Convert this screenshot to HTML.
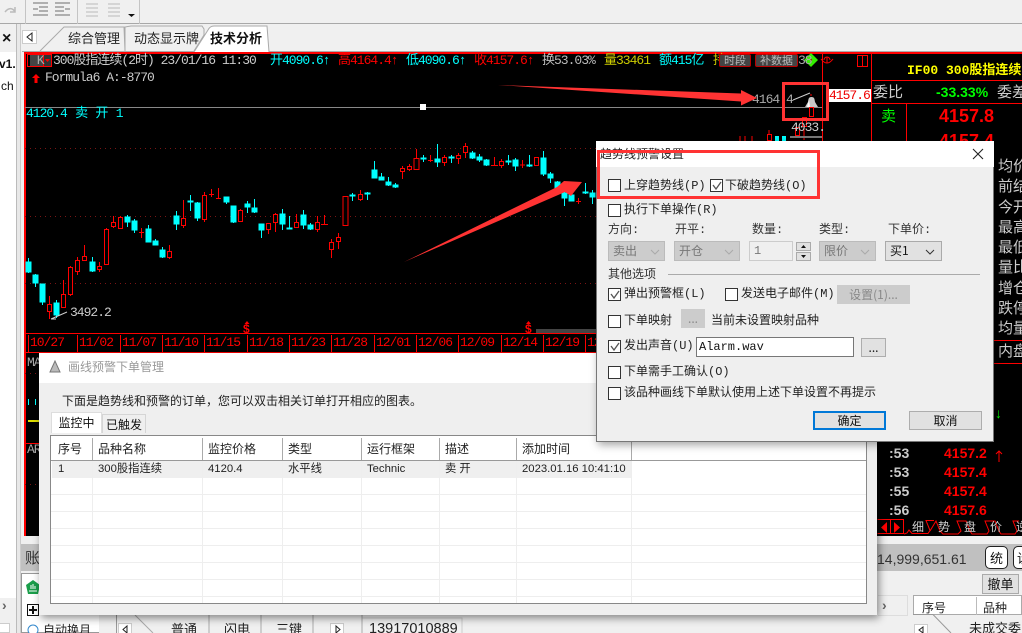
<!DOCTYPE html>
<html><head><meta charset="utf-8"><style>
html,body{margin:0;padding:0;width:1022px;height:633px;overflow:hidden;background:#f0f0f0}
body{position:relative;font:12px "Liberation Sans","Noto Sans CJK SC",sans-serif;color:#111}
div,span{position:absolute;white-space:nowrap;box-sizing:border-box}
.m{font-family:"Liberation Mono","WenQuanYi Zen Hei",monospace;font-size:13px;letter-spacing:-1px;line-height:14px}
.b{font-family:"Liberation Sans","Noto Sans CJK SC",sans-serif;font-weight:bold}
.cb{width:13px;height:13px;border:1px solid #333;background:#fff}
.t{font-family:"Liberation Mono","Noto Sans CJK SC",monospace;font-size:12px;line-height:16px;color:#222}
.sel{height:20px;background:#ccc;border:1px solid #bbb;color:#777;font:12px/18px "Noto Sans CJK SC",sans-serif;padding-left:4px}
.btn{background:#e1e1e1;border:1px solid #adadad;text-align:center;font:12px/17px "Noto Sans CJK SC",sans-serif;color:#111}
.th{top:438px;height:21px;font:12px/21px "Noto Sans CJK SC",sans-serif;color:#222}
.td{top:461px;height:17px;font:11.3px/17px "Liberation Sans","Noto Sans CJK SC",sans-serif;color:#222}
.x{top:336px;color:#f00}
.c{color:#0ff}.r{color:#f00}
.tb{top:518px;color:#ccc;font:12px/18px "Noto Sans CJK SC",sans-serif}
</style></head><body>
<!-- toolbar -->
<div style="left:0;top:0;width:1022px;height:24px;background:#f0f0f0;border-bottom:1px solid #a8a8a8"></div>
<svg style="position:absolute;left:0;top:0" width="140" height="25"><path d="M25.500 0V24M77.500 0V24M139.500 0V24" stroke="#c4c4c4"/><path d="M5 12c4-5 8-4 10 0M15 7v5h-5" fill="none" stroke="#bbb" stroke-width="1.500"/><path d="M33 3h15M39 7h9M39 11h9M33 15h15M33 9h5" stroke="#999" stroke-width="1.400"/><path d="M55 3h15M55 7h9M55 11h9M55 15h15M65 9h5" stroke="#999" stroke-width="1.400"/><path d="M86 4h12M86 8h12M86 12h12M86 16h12" stroke="#ccc" stroke-width="1.400"/><path d="M108 4h12M108 8h12M108 12h12M108 16h12" stroke="#ccc" stroke-width="1.400"/><path d="M128 14h7l-3.500 3z" fill="#111"/></svg>
<!-- left -->
<div style="left:0;top:24px;width:16px;height:28px;background:#f0f0f0"></div>
<div style="left:2px;top:30px;font:bold 16px 'Liberation Sans'">×</div>
<div style="left:0;top:52px;width:16px;height:546px;background:#fff"></div>
<div style="left:-1px;top:57px;font:bold 12px 'Liberation Sans';width:16px;overflow:hidden">v1.</div>
<div style="left:1px;top:79px;font:12px 'Liberation Sans'">ch</div>
<div style="left:16px;top:24px;width:5px;height:609px;background:#e8e8e8;border-left:1px solid #bbb;border-right:1px solid #ccc"></div>
<div style="left:2px;top:597px;font:bold 14px/16px 'Liberation Sans';color:#666">›</div>
<div style="left:0;top:623px;width:10px;height:10px;background:#fff;border:1px solid #ccc;border-left:0"></div>
<!-- chart tabs -->
<div style="left:22px;top:25px;width:1000px;height:27px;background:#f0f0f0;border-bottom:1px solid #aaa"></div>
<svg style="position:absolute;left:22px;top:25px" width="260" height="28"><rect x="0.500" y="5.500" width="14" height="13" fill="#fff" stroke="#ccc"/><path d="M10 8v8l-5-4z" fill="none" stroke="#222"/><path d="M18 26L42 2H102L103 26M103 26V2L109 1H180L182 4V10L172 26" fill="none" stroke="#aaa"/><path d="M172 27L186 5Q188 1 192 1H245L247 27" fill="#fff" stroke="#aaa"/></svg>
<div style="left:68px;top:29px;font:13px/18px 'Noto Sans CJK SC',sans-serif;color:#222">综合管理</div>
<div style="left:134px;top:29px;width:65px;overflow:hidden;font:13px/18px 'Noto Sans CJK SC',sans-serif;color:#222">动态显示牌</div>
<div style="left:210px;top:29px;font:bold 13px/18px 'Noto Sans CJK SC',sans-serif;color:#111">技术分析</div>
<!-- black main -->
<div style="left:24px;top:52px;width:998px;height:484px;background:#000;border-top:2px solid #f00;border-left:2px solid #f00"></div>
<svg style="position:absolute;left:0;top:0" width="1022" height="633">
<path d="M25 148.500H822M25 216.500H822M25 283.500H822M25 373.500H822M25 484.500H822" stroke="#7a1414" stroke-dasharray="1 4"/>
<path d="M25 107.500H822" stroke="#888"/>
<path d="M822.500 53V536M871.500 53V536M871 80.500H1022M871 103.500H1022M871 340.500H1022M871 363.500H1022M906.500 103V160M25 333.500H822M25 352.500H822M25 443.500H100" stroke="#f00"/>
<path d="M28.500 335v17M77.500 335v17M120.500 335v17M162.500 335v17M204.500 335v17M247.500 335v17M289.500 335v17M331.500 335v17M374.500 335v17M416.500 335v17M458.500 335v17M501.500 335v17M543.500 335v17M585.500 335v17" stroke="#f00"/>
<!-- cyan candles -->
<g fill="#0ff" stroke="#0ff" shape-rendering="crispEdges"><path d="M28.500 258V273M35.500 274V287M42.500 284V305M56.500 300V318M92.500 257V272M127.500 215V227M134.500 219V233M148.500 225V242M155.500 239V245M162.500 247V258M176.500 211V230M190.500 195V211M197.500 202V221M226.500 197V204M233.500 206V223M247.500 201V213M254.500 199V213M261.500 224V238M282.500 209V230M289.500 216V229M303.500 210V229M310.500 223V230M352.500 193V201M367.500 192V200M374.500 161V178M381.500 173V180M388.500 177V186M395.500 183V188M423.500 155V162M437.500 144V167M451.500 155V163M472.500 151V159M479.500 154V162M486.500 159V166M508.500 155V165M515.500 158V171M529.500 155V167M543.500 151V176M550.500 172V183M557.500 181V190M564.500 187V206M571.500 195V201M585.500 183V194M592.500 190V204" fill="none"/>
<rect x="26" y="262" width="5" height="10"/><rect x="33" y="275" width="5" height="8"/><rect x="40" y="284" width="5" height="18"/><rect x="54" y="303" width="5" height="12"/><rect x="90" y="262" width="5" height="9"/><rect x="125" y="217" width="5" height="5"/><rect x="132" y="221" width="5" height="9"/><rect x="146" y="229" width="5" height="13"/><rect x="153" y="241" width="5" height="4"/><rect x="160" y="250" width="5" height="7"/><rect x="174" y="216" width="5" height="8"/><rect x="188" y="201" width="5" height="1"/><rect x="195" y="203" width="5" height="15"/><rect x="224" y="197" width="5" height="5"/><rect x="231" y="206" width="5" height="16"/><rect x="245" y="204" width="5" height="3"/><rect x="252" y="208" width="5" height="4"/><rect x="259" y="224" width="5" height="6"/><rect x="280" y="214" width="5" height="10"/><rect x="287" y="228" width="5" height="1"/><rect x="301" y="215" width="5" height="10"/><rect x="308" y="225" width="5" height="4"/><rect x="350" y="195" width="5" height="1"/><rect x="365" y="193" width="5" height="1"/><rect x="372" y="170" width="5" height="8"/><rect x="379" y="177" width="5" height="3"/><rect x="386" y="182" width="5" height="3"/><rect x="393" y="185" width="5" height="2"/><rect x="421" y="158" width="5" height="1"/><rect x="435" y="159" width="5" height="3"/><rect x="449" y="157" width="5" height="1"/><rect x="470" y="153" width="5" height="5"/><rect x="477" y="157" width="5" height="3"/><rect x="484" y="160" width="5" height="5"/><rect x="506" y="161" width="5" height="1"/><rect x="513" y="160" width="5" height="6"/><rect x="527" y="165" width="5" height="1"/><rect x="541" y="158" width="5" height="16"/><rect x="548" y="174" width="5" height="4"/><rect x="555" y="182" width="5" height="7"/><rect x="562" y="193" width="5" height="5"/><rect x="569" y="195" width="5" height="6"/><rect x="583" y="192" width="5" height="1"/><rect x="590" y="193" width="5" height="4"/></g>
<!-- red candles -->
<g fill="#000" stroke="#f00" shape-rendering="crispEdges"><path d="M49.500 296V319M63.500 280V308M70.500 266V296M77.500 257V275M84.500 245V261M99.500 262V272M106.500 228V265M113.500 216V228M120.500 216V229M141.500 228V238M139 232.500H144M169.500 245V259M183.500 200V228M204.500 192V222M211.500 189V197M209 194.500H214M218.500 188V199M216 198.500H221M240.500 209V222M268.500 223V234M275.500 213V232M296.500 214V228M317.500 216V232M324.500 215V224M321 224.500H328M331.500 239V258M338.500 233V249M345.500 196V226M360.500 190V201M402.500 166V179M409.500 164V171M416.500 149V170M430.500 155V162M428 160.500H433M444.500 155V166M458.500 153V164M465.500 143V158M494.500 157V166M491 165.500H498M501.500 159V168M522.500 160V168M520 165H525M536.500 157V165M578.500 198V204M576 201.500H581"/>
<rect x="47.500" y="304.500" width="4" height="7"/><rect x="61.500" y="294.500" width="4" height="13"/><rect x="68.500" y="267.500" width="4" height="27"/><rect x="75.500" y="260.500" width="4" height="11"/><rect x="82.500" y="256.500" width="4" height="4"/><rect x="97.500" y="266.500" width="4" height="3"/><rect x="104.500" y="229.500" width="4" height="35"/><rect x="111.500" y="222.500" width="4" height="4"/><rect x="118.500" y="217.500" width="4" height="11"/><rect x="167.500" y="251.500" width="4" height="6"/><rect x="181.500" y="218.500" width="4" height="7"/><rect x="202.500" y="195.500" width="4" height="24"/><rect x="238.500" y="210.500" width="4" height="11"/><rect x="266.500" y="223.500" width="4" height="6"/><rect x="273.500" y="214.500" width="4" height="8"/><rect x="294.500" y="222.500" width="4" height="5"/><rect x="315.500" y="222.500" width="4" height="7"/><rect x="329.500" y="242.500" width="4" height="7"/><rect x="336.500" y="237.500" width="4" height="4"/><rect x="343" y="196.500" width="5" height="29"/><rect x="358.500" y="194.500" width="4" height="5"/><rect x="400.500" y="168.500" width="4" height="3"/><rect x="407.500" y="166.500" width="4" height="3"/><rect x="414" y="158.500" width="5" height="11"/><rect x="442.500" y="157.500" width="4" height="5"/><rect x="456.500" y="155.500" width="4" height="3"/><rect x="463.500" y="146.500" width="4" height="6"/><rect x="499.500" y="161.500" width="4" height="4"/><rect x="534.500" y="157.500" width="4" height="8"/></g>
<path d="M51 319L67 312M51 319H56" stroke="#ccc" fill="none"/>
<!-- top right chart pieces -->
<path d="M793 100L810 93" stroke="#ccc" fill="none"/>
<path d="M811 94v2" stroke="#f00"/>
<path d="M811.500 97c3 0 3 2 3.500 5l3 5H805l3-5c.5-3 .5-5 3.500-5z" fill="#c8c8c8"/><path d="M809 100l-2 7h3z" fill="#fff"/>
<rect x="809.500" y="107.500" width="4" height="9" fill="#000" stroke="#f00"/>
<path d="M740 141V136M745 141V136M752 141V136M769 141V130M804 127V140" stroke="#f00"/><rect x="802.500" y="117.500" width="4" height="9" fill="#000" stroke="#f00"/><rect x="795.500" y="127.500" width="4" height="8" fill="#000" stroke="#f00"/><rect x="767.500" y="134.500" width="4" height="6" fill="#000" stroke="#f00"/><path d="M790 137H822" stroke="#777" stroke-width="2"/><rect x="775" y="136" width="4" height="5" fill="#0ff"/><rect x="782" y="136" width="4" height="5" fill="#0ff"/>
<path d="M857.500 55.500h10v11h-10zM862.500 55v12" stroke="#f00" fill="none"/>
<path d="M824 60a3 3 0 0 1 6 0M821 59q6 8 12 0M827 57v6" stroke="#f00" fill="none"/>
<path d="M804 60l7-7 7 7-7 7z" fill="#3e0"/><circle cx="811" cy="60" r="1" fill="#a00"/>
<rect x="30" y="54" width="13" height="12" fill="#444"/><rect x="27.500" y="54.500" width="16" height="12" fill="none" stroke="#f00"/><rect x="43.500" y="54.500" width="8" height="12" fill="#333" stroke="#f00"/><path d="M45 59h5l-2.500 3z" fill="#f00"/>
<path d="M36 74l-4 4h2.500v5h3v-5h2.500z" fill="#f00"/>
<rect x="420" y="104" width="6" height="6" fill="#fff"/>
<rect x="536" y="329" width="90" height="4" fill="#444"/>
<path d="M247 321l-2.500 3h5zM528.500 321l-2.500 3h5z" fill="#f00"/>
<path d="M887 522l-6 5.500 6 5.500zM894 522l6 5.500-6 5.500z" fill="#f00"/><path d="M877.500 519.500h26v14h-26M890.500 519.500v14" stroke="#f00" fill="none"/>
<path d="M904 534l3-1 2-3 3 3.500h16l2-3-4-10H934M930 531l6-10 4 10 3 3h15l3-3 -4-10h9l4 10 2 3h15l2-3-4-10h10l4 10 2 3h14l2-3-4-10h6" stroke="#f00" fill="none"/>
<path d="M999 451v11M996 454l3-3 3 3" stroke="#f00" fill="none"/>
</svg>
<div class="m" style="left:30px;top:54px;color:#aaa">&nbsp;K</div>
<div class="m" style="left:53px;top:54px;color:#ccc">300股指连续(2时) 23/01/16 11:30</div>
<div class="m c" style="left:270px;top:54px">开4090.6↑</div>
<div class="m r" style="left:338px;top:54px">高4164.4↑</div>
<div class="m c" style="left:406px;top:54px">低4090.6↑</div>
<div class="m r" style="left:474px;top:54px">收4157.6↑</div>
<div class="m" style="left:542px;top:54px;color:#bbb">换53.03%</div>
<div class="m" style="left:604px;top:54px;color:#cc0">量33461</div>
<div class="m c" style="left:659px;top:54px">额415亿</div>
<div class="m" style="left:713px;top:54px;color:#cc0">持</div>
<div class="m" style="left:798px;top:54px;color:#aaa">38</div>
<div style="left:719px;top:54px;width:32px;height:13px;background:#444;border:1px solid #b00;border-radius:2px;color:#bbb;font:11px/11px 'Noto Sans CJK SC',sans-serif;text-align:center">时段</div>
<div style="left:755px;top:54px;width:43px;height:13px;background:#444;border:1px solid #b00;border-radius:2px;color:#bbb;font:11px/11px 'Noto Sans CJK SC',sans-serif;text-align:center">补数据</div>
<div class="m" style="left:45px;top:71px;color:#ccc">Formula6 A:-8770</div>
<div class="m" style="left:26px;top:107px;color:#0ff;word-spacing:1.500px">4120.4 卖 开 1</div>
<div class="m" style="left:752px;top:93px;color:#aaa">4164.4</div>
<div class="m" style="left:791px;top:121px;color:#ccc">4033.</div>
<div class="m" style="left:70px;top:306px;color:#ccc">3492.2</div>
<div class="m" style="left:828px;top:89px;width:43px;height:13px;background:#fff;color:#e00;line-height:13px;padding-left:1px">4157.6</div>
<div class="m x" style="left:30px">10/27</div><div class="m x" style="left:79px">11/02</div><div class="m x" style="left:122px">11/07</div><div class="m x" style="left:164px">11/10</div><div class="m x" style="left:206px">11/15</div><div class="m x" style="left:249px">11/18</div><div class="m x" style="left:291px">11/23</div><div class="m x" style="left:333px">11/28</div><div class="m x" style="left:376px">12/01</div><div class="m x" style="left:418px">12/06</div><div class="m x" style="left:460px">12/09</div><div class="m x" style="left:503px">12/14</div><div class="m x" style="left:545px">12/19</div><div class="m x" style="left:587px">12</div>
<div class="b" style="left:243px;top:322px;color:#f00;font-size:12px">$</div>
<div class="b" style="left:525px;top:322px;color:#f00;font-size:12px">$</div>
<div class="b" style="left:907px;top:59px;color:#ff0;font:bold 13px 'Liberation Mono','Noto Sans CJK SC',sans-serif;width:115px;overflow:hidden">IF00 300股指连续</div>
<div style="left:873px;top:82px;color:#ccc;font:15px/20px 'Noto Sans CJK SC',sans-serif">委比</div>
<div class="b" style="left:936px;top:84px;color:#0f0;font-size:14px">-33.33%</div>
<div style="left:997px;top:82px;color:#ccc;font:15px/20px 'Noto Sans CJK SC',sans-serif">委差</div>
<div style="left:881px;top:106px;color:#0f0;font:15px/20px 'Noto Sans CJK SC',sans-serif">卖</div>
<div class="b" style="left:939px;top:106px;color:#f00;font-size:18px">4157.8</div>
<div class="b" style="left:939px;top:131px;color:#f00;font-size:18px">4157.4</div>
<div style="left:998px;top:156px;color:#ccc;font:15px/20.300px 'Noto Sans CJK SC',sans-serif;white-space:normal;width:30px;height:185px;overflow:hidden">均价<br>前结<br>今开<br>最高<br>最低<br>量比<br>增仓<br>跌停<br>均量</div>
<div style="left:998px;top:341px;color:#ccc;font:15px/20px 'Noto Sans CJK SC',sans-serif;width:30px;overflow:hidden">内盘</div>
<div class="b" style="left:995px;top:405px;color:#0f0;font-size:14px">↓</div>
<div class="b" style="left:889px;top:444px;color:#ccc;font-size:14px;line-height:19px;white-space:pre">:53
:53
:55
:56</div>
<div class="b" style="left:944px;top:444px;color:#f00;font-size:14px;line-height:19px;white-space:pre">4157.2
4157.4
4157.4
4157.6</div>
<div class="tb" style="left:912px">细</div><div class="tb" style="left:938px">势</div><div class="tb" style="left:964px">盘</div><div class="tb" style="left:990px">价</div><div class="tb" style="left:1016px">逆</div>
<!-- MA pane text -->
<div class="m" style="left:27px;top:356px;color:#aaa">MA</div>
<div class="m" style="left:27px;top:443px;color:#aaa">AR</div>
<div style="left:28px;top:399px;width:1px;height:6px;background:#0ff"></div><div style="left:35px;top:399px;width:1px;height:6px;background:#0ff"></div>
<div style="left:28px;top:420px;width:11px;height:2px;background:#dd0"></div>
<!-- bottom -->
<div style="left:21px;top:536px;width:1001px;height:97px;background:#f0f0f0"></div>
<div style="left:21px;top:544px;width:1001px;height:27px;background:#c0c0c0"></div>
<div style="left:25px;top:548px;font:15px/20px 'Noto Sans CJK SC',sans-serif;color:#333">账</div>
<div style="left:21px;top:573px;width:78px;height:60px;background:#fff;border:1px solid #999;border-right:0"></div>
<svg style="position:absolute;left:0;top:570px" width="60" height="63"><path d="M33 10l7 5-2 9H28l-2-9z" fill="#1a9e4a"/><path d="M29 21h8M31 19v-4M33 19v-5M35 19v-3" stroke="#fff"/><rect x="27.500" y="34.500" width="11" height="11" fill="#fff" stroke="#111"/><path d="M33 36v8M29 40h8" stroke="#111" stroke-width="2"/><circle cx="33" cy="60" r="5" fill="#fff" stroke="#38c"/></svg>
<div style="left:43px;top:621px;font:12px/18px 'Noto Sans CJK SC',sans-serif;color:#222">自动换月</div>
<div style="left:116px;top:615px;width:906px;height:18px;border-left:1px solid #999;background:#f0f0f0"></div>
<svg style="position:absolute;left:116px;top:615px" width="350" height="18"><rect x="2.500" y="8.500" width="13" height="11" fill="#fff" stroke="#ccc"/><path d="M11 11v7l-4-3.500z" fill="none" stroke="#222"/><path d="M19 0L37 18M93 0V18M145 0V18M197 0V18M246 0V18" stroke="#aaa" fill="none"/><rect x="214.500" y="8.500" width="13" height="11" fill="#fff" stroke="#ccc"/><path d="M220 11v7l4-3.500z" fill="none" stroke="#222"/><path d="M246.500 3H346V18" stroke="#ccc" fill="none"/></svg>
<div style="left:171px;top:620px;font:13px/18px 'Noto Sans CJK SC',sans-serif;color:#222">普通</div>
<div style="left:224px;top:620px;font:13px/18px 'Noto Sans CJK SC',sans-serif;color:#222">闪电</div>
<div style="left:276px;top:620px;font:13px/18px 'Noto Sans CJK SC',sans-serif;color:#222">三键</div>
<div style="left:369px;top:620px;font:14.500px/18px 'Liberation Sans';color:#222">13917010889</div>
<div style="left:877px;top:549px;font:14px/20px 'Liberation Sans';color:#333">14,999,651.61</div>
<div style="left:985px;top:546px;width:23px;height:23px;background:#fff;border:1px solid #222;border-radius:5px;font:13px/21px 'Noto Sans CJK SC',sans-serif;text-align:center">统</div>
<div style="left:1013px;top:546px;width:23px;height:23px;background:#fff;border:1px solid #222;border-radius:5px;font:13px/21px 'Noto Sans CJK SC',sans-serif;padding-left:3px">设</div>
<div style="left:982px;top:574px;width:37px;height:20px;background:#e1e1e1;border:1px solid #aaa;font:13px/18px 'Noto Sans CJK SC',sans-serif;text-align:center">撤单</div>
<div style="left:878px;top:595px;width:30px;height:21px;border:1px solid #ddd;border-left:0;color:#666;font:bold 14px/18px 'Liberation Sans';padding-left:4px">›</div>
<div style="left:913px;top:595px;width:109px;height:20px;background:#fff;border:1px solid #aaa"></div>
<div style="left:922px;top:600px;font:12px/16px 'Noto Sans CJK SC',sans-serif;color:#222">序号</div>
<div style="left:983px;top:600px;font:12px/16px 'Noto Sans CJK SC',sans-serif;color:#222">品种</div>
<div style="left:976px;top:597px;width:1px;height:18px;background:#bbb"></div>
<svg style="position:absolute;left:913px;top:614px" width="109" height="19"><path d="M0 .5H20L38 19" stroke="#999" fill="none"/><rect x="1.500" y="10.500" width="13" height="11" fill="#fff" stroke="#ccc"/><path d="M10 13v6l-4-3z" fill="none" stroke="#222"/></svg>
<div style="left:969px;top:620px;font:13px/16px 'Noto Sans CJK SC',sans-serif;color:#222">未成交委</div>
<!-- management dialog -->
<div style="left:39px;top:353px;width:838px;height:262px;background:#efefef;box-shadow:2px 3px 8px rgba(0,0,0,.45)"></div>
<div style="left:39px;top:353px;width:838px;height:30px;background:#fff"></div>
<svg style="position:absolute;left:48px;top:360px" width="14" height="14"><path d="M7 1L2 12H12Z" fill="#bbb" stroke="#777"/></svg>
<div style="left:68px;top:358px;font:12px/18px 'Noto Sans CJK SC',sans-serif;color:#999">画线预警下单管理</div>
<div style="left:62px;top:392px;font:12px/18px 'Noto Sans CJK SC',sans-serif;color:#222">下面是趋势线和预警的订单，您可以双击相关订单打开相应的图表。</div>
<div style="left:51px;top:412px;width:51px;height:21px;background:#fff;border:1px solid #ddd;border-bottom:0;font:12px/20px 'Noto Sans CJK SC',sans-serif;text-align:center">监控中</div>
<div style="left:102px;top:414px;width:44px;height:19px;background:#efefef;border:1px solid #d5d5d5;border-bottom:0;font:12px/19px 'Noto Sans CJK SC',sans-serif;text-align:center">已触发</div>
<div style="left:50px;top:435px;width:817px;height:169px;background:#fff;border:1px solid #888"></div>
<div style="left:51px;top:460px;width:815px;height:1px;background:#999"></div>
<div style="left:52px;top:461px;width:580px;height:17px;background:#efefef"></div>
<svg style="position:absolute;left:51px;top:436px" width="815" height="167"><path d="M0 58.500H815M0 75.500H815M0 92.500H815M0 109.500H815M0 126.500H815M0 143.500H815M0 160.500H815" stroke="#eee"/><path d="M41.500 25V167M151.500 25V167M231.500 25V167M310.500 25V167M388.500 25V167M465.500 25V167M580.500 25V167" stroke="#eee"/><path d="M41.500 2V24M151.500 2V24M231.500 2V24M310.500 2V24M388.500 2V24M465.500 2V24M580.500 2V24" stroke="#aaa"/></svg>
<div class="th" style="left:58px">序号</div><div class="th" style="left:98px">品种名称</div><div class="th" style="left:208px">监控价格</div><div class="th" style="left:288px">类型</div><div class="th" style="left:367px">运行框架</div><div class="th" style="left:445px">描述</div><div class="th" style="left:522px">添加时间</div>
<div class="td" style="left:58px">1</div><div class="td" style="left:98px">300股指连续</div><div class="td" style="left:208px">4120.4</div><div class="td" style="left:288px">水平线</div><div class="td" style="left:367px">Technic</div><div class="td" style="left:445px">卖 开</div><div class="td" style="left:522px">2023.01.16 10:41:10</div>
<!-- settings dialog -->
<div style="left:596px;top:141px;width:398px;height:301px;background:#efefef;border:1px solid #777;border-top:0;box-shadow:2px 3px 8px rgba(0,0,0,.35)"></div>
<div style="left:596px;top:141px;width:398px;height:26px;background:#fff"></div>
<div style="left:600px;top:146px;font:12px/16px 'Noto Sans CJK SC',sans-serif;color:#222">趋势线预警设置</div>
<svg style="position:absolute;left:972px;top:148px" width="13" height="12"><path d="M1 1L11 11M11 1L1 11" stroke="#222" stroke-width="1.100"/></svg>
<div class="cb" style="left:608px;top:179px"></div><div class="t" style="left:624px;top:178px">上穿趋势线(P)</div>
<div class="cb" style="left:710px;top:179px"></div><div class="t" style="left:725px;top:178px">下破趋势线(O)</div>
<div class="cb" style="left:608px;top:204px"></div><div class="t" style="left:624px;top:202px">执行下单操作(R)</div>
<div class="t" style="left:608px;top:222px;color:#333">方向:</div><div class="t" style="left:675px;top:222px;color:#333">开平:</div><div class="t" style="left:752px;top:222px;color:#333">数量:</div><div class="t" style="left:819px;top:222px;color:#333">类型:</div><div class="t" style="left:888px;top:222px;color:#333">下单价:</div>
<div class="sel" style="left:608px;top:241px;width:57px">卖出</div><div class="sel" style="left:674px;top:241px;width:66px">开仓</div>
<div style="left:749px;top:241px;width:44px;height:20px;background:#efefef;border:1px solid #ccc;font:12px/18px 'Liberation Mono';color:#777;padding-left:4px">1</div>
<div style="left:796px;top:242px;width:15px;height:9px;background:#e1e1e1;border:1px solid #aaa"></div><div style="left:796px;top:252px;width:15px;height:9px;background:#e1e1e1;border:1px solid #aaa"></div>
<div class="sel" style="left:819px;top:241px;width:57px">限价</div>
<div class="sel" style="left:885px;top:241px;width:57px;background:#e1e1e1;border-color:#aaa;color:#111">买1</div>
<div class="t" style="left:608px;top:267px;color:#333">其他选项</div><div style="left:668px;top:274px;width:312px;height:1px;background:#aaa"></div>
<div class="cb" style="left:608px;top:288px"></div><div class="t" style="left:624px;top:286px">弹出预警框(L)</div>
<div class="cb" style="left:725px;top:288px"></div><div class="t" style="left:741px;top:286px">发送电子邮件(M)</div>
<div class="btn" style="left:837px;top:285px;width:73px;height:19px;background:#ccc;color:#888;border-color:#ccc">设置(1)...</div>
<div class="cb" style="left:608px;top:315px"></div><div class="t" style="left:624px;top:313px">下单映射</div>
<div class="btn" style="left:681px;top:309px;width:24px;height:19px;background:#ccc;color:#888;border-color:#ccc">...</div>
<div class="t" style="left:711px;top:313px">当前未设置映射品种</div>
<div class="cb" style="left:608px;top:340px"></div><div class="t" style="left:624px;top:338px">发出声音(U):</div>
<div style="left:696px;top:337px;width:158px;height:20px;background:#fff;border:1px solid #777;font:12px/18px 'Liberation Mono';padding-left:2px;color:#111">Alarm.wav</div>
<div class="btn" style="left:861px;top:338px;width:25px;height:19px">...</div>
<div class="cb" style="left:608px;top:366px"></div><div class="t" style="left:624px;top:364px">下单需手工确认(O)</div>
<div class="cb" style="left:608px;top:387px"></div><div class="t" style="left:624px;top:385px">该品种画线下单默认使用上述下单设置不再提示</div>
<div class="btn" style="left:813px;top:411px;width:73px;height:19px;border:2px solid #0078d7;line-height:15px">确定</div>
<div class="btn" style="left:909px;top:411px;width:73px;height:19px">取消</div>
<svg style="position:absolute;left:0;top:0" width="1022" height="633">
<path d="M713 185l3 4 5-7M611 294l3 4 5-7M611 346l3 4 5-7" stroke="#555" stroke-width="1.300" fill="none"/>
<path d="M651 250l4 4 4-4M725 250l4 4 4-4M861 250l4 4 4-4" stroke="#aaa" fill="none"/><path d="M926 250l4 4 4-4" stroke="#333" fill="none"/>
<path d="M801 248l2.500-3 2.500 3zM801 255l2.500 3 2.500-3z" fill="#111"/>
<g fill="#f33"><path d="M498 85L741 93.500V90L757 98L741 105.500V101.500Z"/><path d="M404 262L557 187L564 181L582 182L571 196L565 192Z"/></g>
<rect x="598.500" y="151.500" width="220" height="46" fill="none" stroke="#f33" stroke-width="3"/>
<rect x="783.500" y="83.500" width="44" height="36" fill="none" stroke="#f33" stroke-width="3"/>
</svg>
</body></html>
